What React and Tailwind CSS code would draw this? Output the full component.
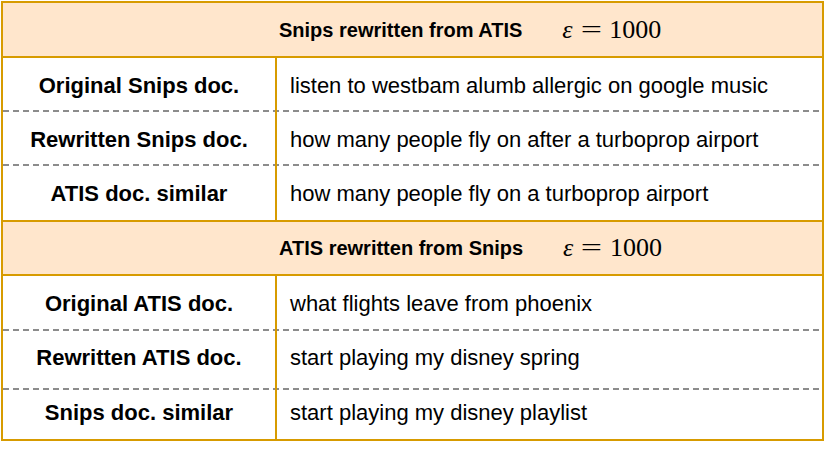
const sections = [
  {
    title: 'Snips rewritten from ATIS',
    rows: [
      ['Original Snips doc.', 'listen to westbam alumb allergic on google music', 'h-[54px]', ''],
      ['Rewritten Snips doc.', 'how many people fly on after a turboprop airport', 'h-[54px]', ''],
      ['ATIS doc. similar', 'how many people fly on a turboprop airport', 'h-[54px]', ''],
    ],
  },
  {
    title: 'ATIS rewritten from Snips',
    rows: [
      ['Original ATIS doc.', 'what flights leave from phoenix', 'h-[55px]', ''],
      ['Rewritten ATIS doc.', 'start playing my disney spring', 'h-[59px]', 'pb-[6px]'],
      ['Snips doc. similar', 'start playing my disney playlist', 'h-[49px]', 'pb-[5px]'],
    ],
  },
];

const dashed =
  'bg-[repeating-linear-gradient(90deg,#8c8c8c_0_6px,transparent_6px_10px)] bg-[length:100%_2px] bg-bottom bg-no-repeat';

function Header({ title, first }) {
  return (
    <div
      className={`flex items-center bg-[#ffe6cc] border-b-2 border-[#d79b00] pl-[276px] ${
        first ? 'h-[55px]' : 'h-[56px] border-t-2'
      }`}
    >
      <span className="font-bold text-[20px] text-black">{title}</span>
      <span className="ml-[40px] text-[26px] text-black font-['Liberation_Serif',serif] leading-none flex items-center">
        <i>ε</i>
        <span className="inline-block mx-[11px] scale-x-[1.45]">=</span>
        <span>1000</span>
      </span>
    </div>
  );
}

function Row({ label, text, h, pad, last }) {
  return (
    <div className={`flex ${h} ${last ? '' : dashed}`}>
      <div
        className={`w-[274px] shrink-0 border-r-2 border-[#d79b00] flex items-center justify-center font-bold text-[22px] text-black ${pad}`}
      >
        {label}
      </div>
      <div className={`flex items-center pl-[13px] text-[22px] text-black ${pad}`}>{text}</div>
    </div>
  );
}

export default function App() {
  return (
    <div className="w-[831px] h-[449px] bg-white pt-[1px] pl-[1px] font-['Liberation_Sans',Arial,sans-serif]">
      <div className="w-[823px] border-2 border-[#d79b00] bg-white">
        {sections.map((s, i) => (
          <div key={i}>
            <Header title={s.title} first={i === 0} />
            {s.rows.map((r, j) => (
              <Row key={j} label={r[0]} text={r[1]} h={r[2]} pad={r[3]} last={j === s.rows.length - 1} />
            ))}
          </div>
        ))}
      </div>
    </div>
  );
}
